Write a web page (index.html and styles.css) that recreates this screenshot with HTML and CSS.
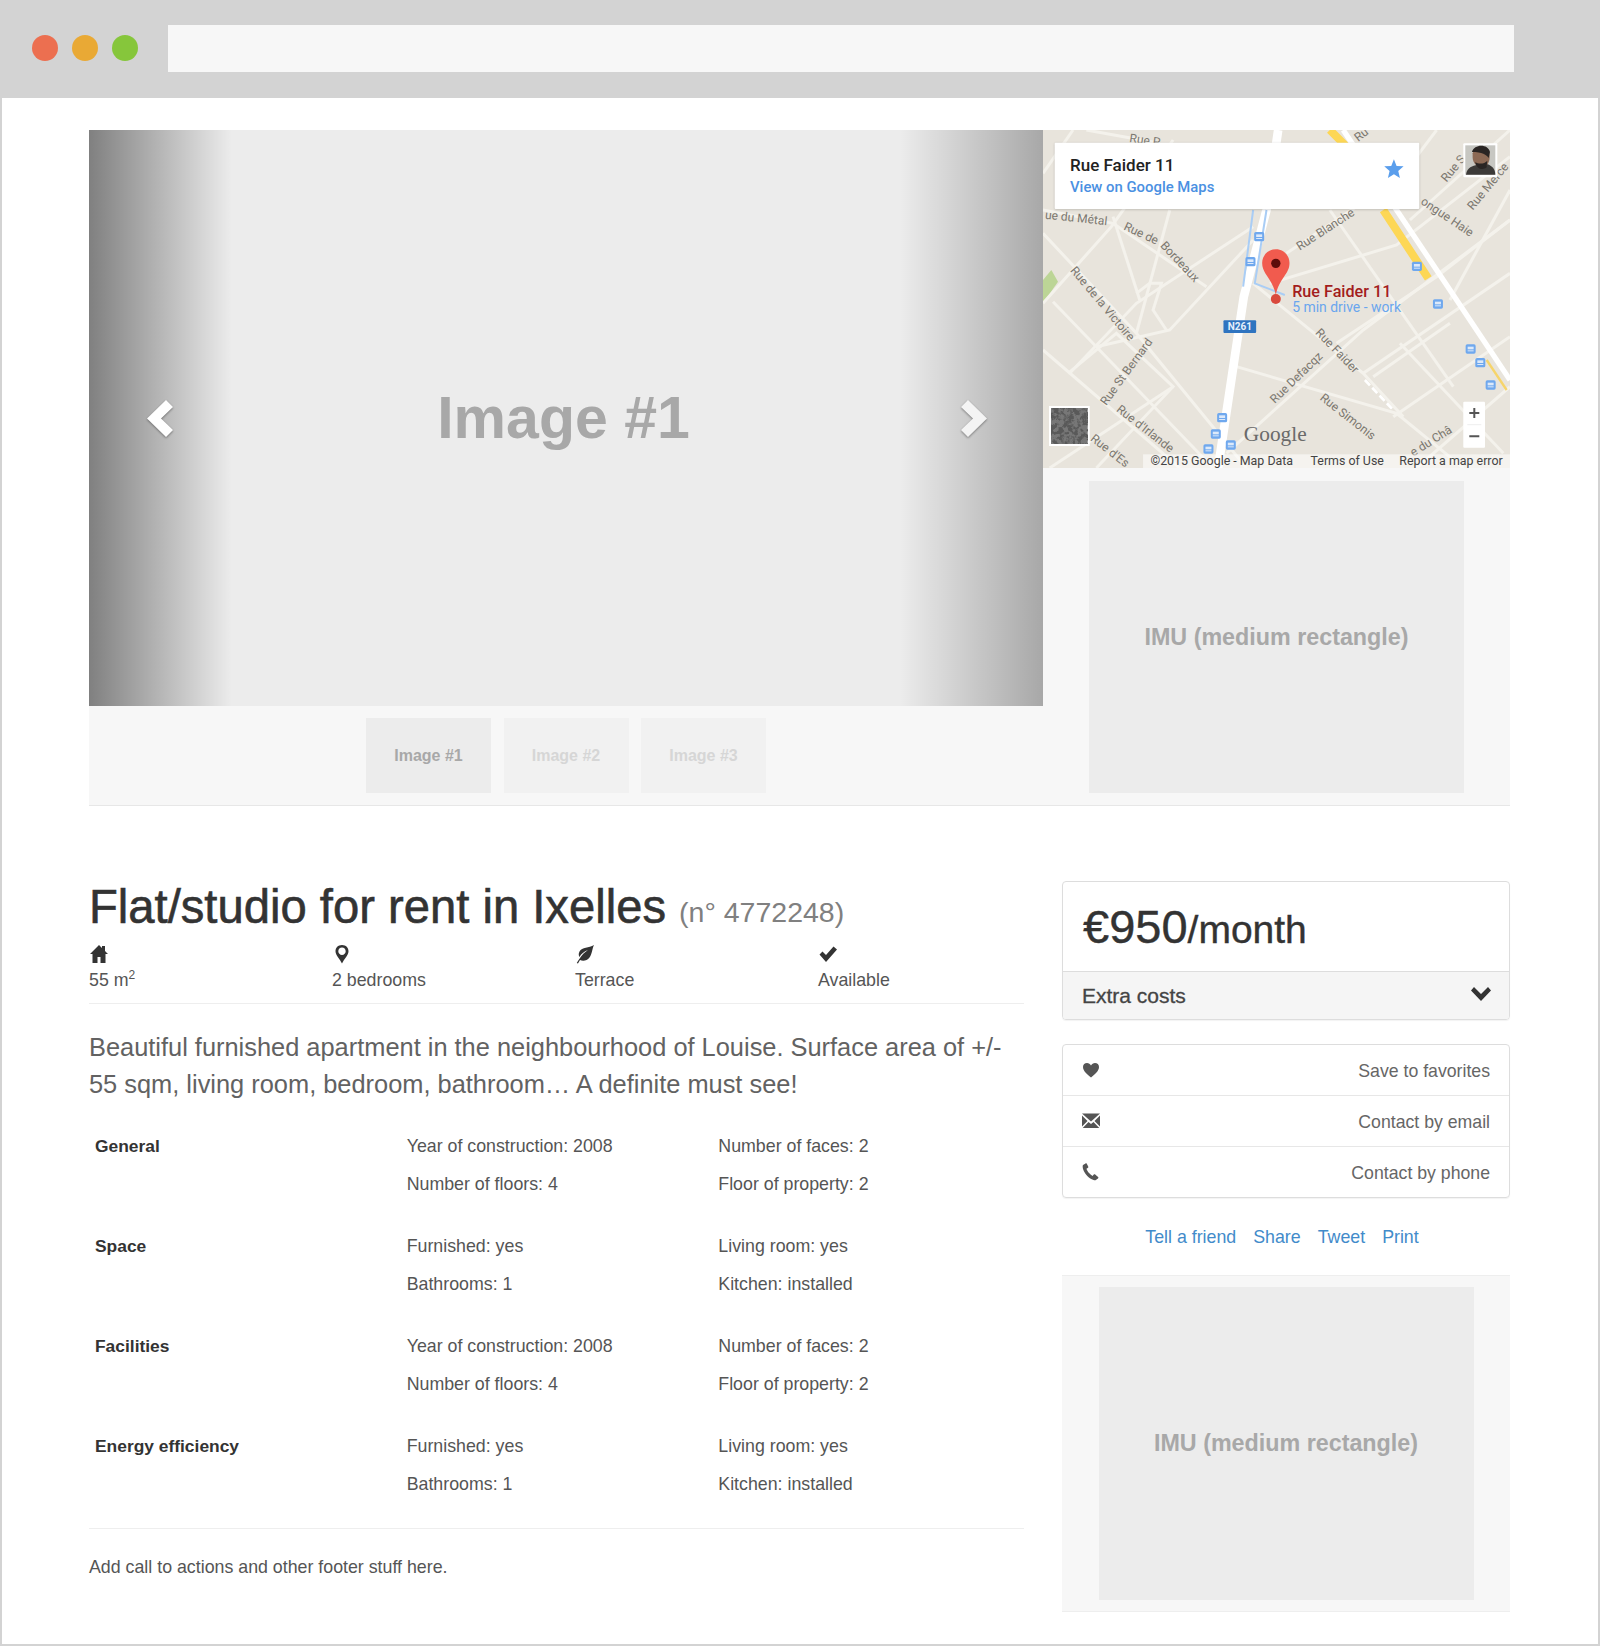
FILE: index.html
```html
<!DOCTYPE html>
<html lang="en">
<head>
    <meta charset="UTF-8">
    <meta name="viewport" content="width=device-width, initial-scale=1.0">
    <title>Flat/studio for rent in Ixelles</title>
    <link rel="stylesheet" href="styles.css">
</head>
<body>

    <div class="window">
        <div class="browser-bar">
            <span class="dot dot-red"></span>
            <span class="dot dot-orange"></span>
            <span class="dot dot-green"></span>
            <div class="address-bar"></div>
        </div>

        <div class="page">
            <div class="top">
                <div class="gallery">
                    <div class="slide">
                        <div class="control control-left">
                            <svg class="chevron" viewBox="0 0 26 37"><path d="M19 0l7 7-12 11.500L26 30l-7 7L0 18.500z"/></svg>
                        </div>
                        <div class="slide-label">Image #1</div>
                        <div class="control control-right">
                            <svg class="chevron" viewBox="0 0 26 37"><path d="M7 0L0 7l12 11.500L0 30l7 7 19-18.500z"/></svg>
                        </div>
                    </div>
                    <div class="thumbs">
                        <div class="thumb active">Image #1</div>
                        <div class="thumb">Image #2</div>
                        <div class="thumb">Image #3</div>
                    </div>
                </div>

                <div class="top-side">
                    <div class="map">
                        <svg class="map-svg" viewBox="10 30 1400 1014" preserveAspectRatio="none">
                            <defs>
                                <filter id="sat" x="0" y="0" width="1" height="1"><feTurbulence type="fractalNoise" baseFrequency="0.07" numOctaves="4" seed="3"/><feColorMatrix values="0 0 0 0 .1  0 0 0 0 .1  0 0 0 0 .1  6 0 0 0 -2.500"/></filter>
                                <g id="bus"><rect x="-15" y="-14" width="30" height="28" rx="5" fill="#6fa8ee"/><rect x="-9" y="-7" width="18" height="8" fill="#dce9fa"/><rect x="-9" y="4" width="18" height="3" fill="#dce9fa"/></g>
                            </defs>
                            <rect x="10" y="30" width="1400" height="1014" fill="#e8e4dc"/>
                            <path d="M10 480L35 450 55 485 10 550z" fill="#bcd596"/>

                            <g class="streets">
                                <path d="M10 340L290 640 620 1044"/>
                                <path d="M10 550L215 320 400 60"/>
                                <path d="M40 545L520 1044"/>
                                <path d="M10 690L420 1044"/>
                                <path d="M90 760L290 550 640 320"/>
                                <path d="M220 290L300 540"/>
                                <path d="M10 270L220 310 500 500"/>
                                <path d="M390 270L290 640"/>
                                <path d="M170 680L390 630 640 360"/>
                                <path d="M290 520L330 490 365 490 340 570 380 630"/>
                                <path d="M85 760L230 640 400 800 170 1044"/>
                                <path d="M590 740L1070 880 1270 1044"/>
                                <path d="M560 1000L970 630 1410 300"/>
                                <path d="M640 490L970 760 1090 890"/>
                                <path d="M740 400L1100 160"/>
                                <path d="M870 270L1240 800"/>
                                <path d="M690 490L1070 375 1410 110"/>
                                <path d="M970 760L1410 460"/>
                                <path d="M890 670L1190 470 1410 300"/>
                                <path d="M1080 670L1390 1000"/>
                                <path d="M1060 890L1410 650"/>
                                <path d="M1230 610L1000 770"/>
                                <path d="M1110 300L1410 30"/>
                                <path d="M1230 540L1410 210"/>
                                <path d="M1130 1044L1410 800"/>
                                <path d="M1190 30L1130 110"/>
                                <path d="M140 30L360 70" stroke="#a9cdf5"/>
                                <path d="M10 160L100 30"/>
                                <path d="M30 1044L400 800"/>
                            </g>

                            <path class="road-yellow" d="M870 30L930 90M1030 270L1165 475"/>
                            <path class="road-white" d="M910 30L1410 780"/>
                            <path class="road-thin-yellow" d="M1340 720L1400 810"/>
                            <path class="road-main" d="M535 1044L612 530 680 270 715 30"/>
                            <path class="road-blue" d="M680 270L645 490 735 525M640 270L610 500"/>
                            <path class="road-dash" d="M975 780L1060 870"/>

                            <use href="#bus" x="658" y="350"/>
                            <use href="#bus" x="632" y="425"/>
                            <use href="#bus" x="1131" y="439"/>
                            <use href="#bus" x="1194" y="552"/>
                            <use href="#bus" x="1292" y="687"/>
                            <use href="#bus" x="1321" y="728"/>
                            <use href="#bus" x="1352" y="795"/>
                            <use href="#bus" x="547" y="893"/>
                            <use href="#bus" x="528" y="942"/>
                            <use href="#bus" x="573" y="975"/>
                            <use href="#bus" x="506" y="987"/>

                            <g class="map-names">
                                <text x="268" y="66" transform="rotate(8 268 66)">Rue P</text>
                                <text x="955" y="66" transform="rotate(-38 955 66)">Ru</text>
                                <text x="15" y="296" transform="rotate(6 15 296)">ue du Métal</text>
                                <text x="250" y="328" transform="rotate(25 250 328)">Rue de</text>
                                <text x="360" y="378" transform="rotate(47 360 378)">Bordeaux</text>
                                <text x="780" y="392" transform="rotate(-33 780 392)">Rue Blanche</text>
                                <text x="1140" y="250" transform="rotate(34 1140 250)">ongue Haie</text>
                                <text x="1220" y="188" transform="rotate(-50 1220 188)">Rue S</text>
                                <text x="1298" y="272" transform="rotate(-50 1298 272)">Rue Merce</text>
                                <text x="90" y="452" transform="rotate(50 90 452)">Rue de la Victoire</text>
                                <text x="200" y="858" transform="rotate(-54 200 858)">Rue St Bernard</text>
                                <text x="228" y="872" transform="rotate(38 228 872)">Rue d'Irlande</text>
                                <text x="150" y="960" transform="rotate(38 150 960)">Rue d'Es</text>
                                <text x="705" y="852" transform="rotate(-44 705 852)">Rue Defacqz</text>
                                <text x="825" y="640" transform="rotate(46 825 640)">Rue Faider</text>
                                <text x="838" y="838" transform="rotate(38 838 838)">Rue Simonis</text>
                                <text x="1120" y="1010" transform="rotate(-32 1120 1010)">e du Châ</text>
                            </g>

                            <rect x="551" y="601" width="98" height="38" rx="3" fill="#2f74c0"/>
                            <text class="shield" x="600" y="630">N261</text>

                            <text class="google" x="612" y="962">Google</text>

                            <path d="M708 388c-23 0-41 18-41 41 0 34 30 44 41 96 11-52 41-62 41-96 0-23-18-41-41-41z" fill="#f15b4e"/>
                            <circle cx="708" cy="430" r="14" fill="#5c0d0a"/>
                            <circle cx="708" cy="537" r="15" fill="#d9493d"/>
                            <text class="pin-name" x="757" y="530">Rue Faider 11</text>
                            <text class="pin-sub" x="757" y="577">5 min drive - work</text>

                            <rect class="map-card" x="45" y="68" width="1093" height="199" rx="3"/>
                            <text class="card-name" x="91" y="152">Rue Faider 11</text>
                            <text class="card-link" x="91" y="217">View on Google Maps</text>
                            <path d="M1062 118l8 20 21 1-16 14 5 21-18-11-18 11 5-21-16-14 21-1z" fill="#5a9eec"/>

                            <rect x="1270" y="70" width="102" height="102" rx="3" fill="#fff"/>
                            <rect x="1276" y="76" width="90" height="88" fill="#c7c7c2"/>
                            <path d="M1278 164c4-24 20-26 34-30 4 4 24 4 30-2 14 6 24 14 24 32z" fill="#3c3a38"/>
                            <path d="M1298 100c8-22 44-20 50 0 4 16-2 34-14 42-14 6-36-8-36-30z" fill="#8d6a55"/>
                            <path d="M1296 96c6-24 48-26 54 0l-4 18c-6-10-20-18-50-18zM1306 126c8 6 26 8 36-4l-2 20c-10 10-32 6-34-16z" fill="#2a2523"/>

                            <rect x="1270" y="845" width="65" height="138" rx="3" fill="#fff"/>
                            <path d="M1288 879h30M1303 864v30M1288 949h30" stroke="#555" stroke-width="6"/>
                            <path d="M1282 914h42" stroke="#e6e6e6" stroke-width="2"/>

                            <rect x="28" y="858" width="122" height="120" fill="#fff"/>
                            <rect x="34" y="864" width="110" height="108" fill="#777"/>
                            <rect x="34" y="864" width="110" height="108" filter="url(#sat)"/>

                            <rect x="310" y="1003" width="1100" height="41" fill="#fff" opacity=".55"/>
                            <g class="attrib">
                                <text x="332" y="1034">©2015 Google - Map Data</text>
                                <text x="812" y="1034">Terms of Use</text>
                                <text x="1078" y="1034">Report a map error</text>
                            </g>
                        </svg>
                    </div>
                    <div class="ad-wrap">
                        <div class="ad">IMU (medium rectangle)</div>
                    </div>
                </div>
            </div>

            <div class="content">
                <div class="main">
                    <h1>Flat/studio for rent in Ixelles <small>(n° 4772248)</small></h1>

                    <div class="features">
                        <div class="feature">
                            <svg class="icon" viewBox="0 0 20 20"><path d="M10 1L1 10h2.500v9h5v-6h3v6h5v-9H19l-3-3V2h-3v2z"/></svg>
                            <span>55 m<sup>2</sup></span>
                        </div>
                        <div class="feature">
                            <svg class="icon" viewBox="0 0 20 20"><path fill-rule="evenodd" d="M10 1C6 1 3.500 3.800 3.500 7.200 3.500 11 8 15 10 19.500 12 15 16.500 11 16.500 7.200 16.500 3.800 14 1 10 1zm0 2.600c2.100 0 3.700 1.600 3.700 3.600s-1.600 3.700-3.700 3.700-3.700-1.700-3.700-3.700S7.900 3.600 10 3.600z"/></svg>
                            <span>2 bedrooms</span>
                        </div>
                        <div class="feature">
                            <svg class="icon" viewBox="0 0 20 20"><path d="M19 1C14 4 7 3 4.500 7.500 3.200 10 3.800 12 4.500 13 6 10 9 7.500 13 6 10 8 6.500 11 4 15.500 3 17 2.300 18 1.800 19l1.200.5c.6-1.200 1.300-2.400 2-3.400 3 1.200 7 .8 9.500-2.600C17 10.500 17 5 19 1z"/></svg>
                            <span>Terrace</span>
                        </div>
                        <div class="feature">
                            <svg class="icon" viewBox="0 0 20 20"><path d="M1.500 10.500L4.500 7.500 8 11 15.500 2.500 19 5.500 8 18z"/></svg>
                            <span>Available</span>
                        </div>
                    </div>

                    <p class="lead">Beautiful furnished apartment in the neighbourhood of Louise. Surface area of +/- 55 sqm, living room, bedroom, bathroom… A definite must see!</p>

                    <table class="specs">
                        <tr>
                            <th rowspan="2">General</th>
                            <td>Year of construction: 2008</td>
                            <td>Number of faces: 2</td>
                        </tr>
                        <tr class="last">
                            <td>Number of floors: 4</td>
                            <td>Floor of property: 2</td>
                        </tr>
                        <tr>
                            <th rowspan="2">Space</th>
                            <td>Furnished: yes</td>
                            <td>Living room: yes</td>
                        </tr>
                        <tr class="last">
                            <td>Bathrooms: 1</td>
                            <td>Kitchen: installed</td>
                        </tr>
                        <tr>
                            <th rowspan="2">Facilities</th>
                            <td>Year of construction: 2008</td>
                            <td>Number of faces: 2</td>
                        </tr>
                        <tr class="last">
                            <td>Number of floors: 4</td>
                            <td>Floor of property: 2</td>
                        </tr>
                        <tr>
                            <th rowspan="2">Energy efficiency</th>
                            <td>Furnished: yes</td>
                            <td>Living room: yes</td>
                        </tr>
                        <tr class="last">
                            <td>Bathrooms: 1</td>
                            <td>Kitchen: installed</td>
                        </tr>
                    </table>

                    <div class="main-footer">Add call to actions and other footer stuff here.</div>
                </div>

                <div class="side">
                    <div class="panel price-panel">
                        <div class="price"><strong>€950</strong>/month</div>
                        <div class="extra">
                            <span>Extra costs</span>
                            <svg class="extra-icon" viewBox="0 0 20 14"><path d="M3 0L0 3.500 10 14 20 3.500 17 0 10 7z"/></svg>
                        </div>
                    </div>

                    <div class="panel actions">
                        <div class="action">
                            <svg class="action-icon" viewBox="0 0 18 18"><path d="M9 16.500C5 13 1 10 1 6c0-2.500 1.800-4 4-4 1.700 0 3.200 1 4 2.500C9.800 3 11.300 2 13 2c2.200 0 4 1.500 4 4 0 4-4 7-8 10.500z"/></svg>
                            <span>Save to favorites</span>
                        </div>
                        <div class="action">
                            <svg class="action-icon" viewBox="0 0 18 18"><path d="M0 1.500h18L9 9.500zM0 3.500v11l5.500-5.500zM18 3.500v11l-5.500-5.500zM6.500 10L9 12l2.500-2 5.800 6H.7z"/></svg>
                            <span>Contact by email</span>
                        </div>
                        <div class="action">
                            <svg class="action-icon" viewBox="0 0 18 18"><path d="M3.500 0.500L1 2C.3 3 .5 7 4 11.500c3.500 4.500 8 6 9.500 5.800l2.500-1.800c.5-.4.500-1 .1-1.400l-2.900-2.600c-.4-.3-1-.3-1.400.1l-1.300 1.300C9 12 7.500 10.800 6.300 9.200 5.200 7.700 4.500 6.300 4.500 5.800L6 4.700c.4-.3.500-.9.200-1.300L4.800.8C4.500.3 3.900.2 3.500.5z"/></svg>
                            <span>Contact by phone</span>
                        </div>
                    </div>

                    <div class="share">
                        <a href="#">Tell a friend</a>
                        <a href="#">Share</a>
                        <a href="#">Tweet</a>
                        <a href="#">Print</a>
                    </div>

                    <div class="ad-wrap ad-wrap-side">
                        <div class="ad">IMU (medium rectangle)</div>
                    </div>
                </div>
            </div>
        </div>
    </div>

</body>
</html>
```

FILE: styles.css
```css
html, body {
    margin: 0;
    padding: 0;
}
body {
    font-family: "Liberation Sans", Arial, sans-serif;
    color: #333;
    background: #fff;
}
.window {
    box-sizing: border-box;
    width: 1600px;
    height: 1646px;
    border: 2px solid #d3d3d3;
    border-top: none;
    overflow: hidden;
}

/* browser chrome */
.browser-bar {
    display: flex;
    align-items: center;
    height: 96px;
    margin: 0 -2px;
    padding: 0 0 2px 32px;
    background: #d3d3d3;
}
.dot {
    width: 26px;
    height: 26px;
    border-radius: 50%;
    margin-right: 14px;
}
.dot-red { background: #ec6f50; }
.dot-orange { background: #e9a935; }
.dot-green { background: #86c63b; }
.address-bar {
    width: 1346px;
    height: 47px;
    margin-left: 16px;
    background: #f7f7f7;
}

.page {
    padding: 32px 88px 0 87px;
}

/* gallery + map */
.top {
    display: flex;
    border-bottom: 1px solid #e7e7e7;
}
.gallery {
    width: 954px;
    background: #f7f7f7;
}
.slide {
    display: flex;
    align-items: center;
    justify-content: space-between;
    height: 576px;
    background: #ececec;
}
.control {
    display: flex;
    align-items: center;
    width: 143px;
    height: 100%;
    box-sizing: border-box;
}
.control-left {
    padding-left: 58px;
    background: linear-gradient(to right, rgba(0,0,0,0.46), rgba(0,0,0,0));
}
.control-right {
    justify-content: flex-end;
    padding-right: 56px;
    background: linear-gradient(to left, rgba(0,0,0,0.29), rgba(0,0,0,0));
}
.chevron {
    width: 26px;
    height: 37px;
    fill: #fff;
    filter: drop-shadow(0 1px 1px rgba(0,0,0,0.4));
}
.control-right .chevron {
    fill: #f4f4f4;
}
.slide-label {
    margin-right: 5px;
    font-size: 59px;
    font-weight: bold;
    color: #a8a8a8;
}
.thumbs {
    display: flex;
    justify-content: center;
    gap: 12.500px;
    padding: 12px 0;
}
.thumb {
    display: flex;
    align-items: center;
    justify-content: center;
    width: 125px;
    height: 75px;
    background: #f1f1f1;
    color: #d6d6d6;
    font-size: 16px;
    font-weight: bold;
}
.thumb.active {
    background: #ececec;
    color: #a8a8a8;
}

.top-side {
    width: 467px;
    background: #f7f7f7;
}
.map {
    height: 338px;
}
.map-svg {
    display: block;
    width: 467px;
    height: 338px;
    font-family: Roboto, sans-serif;
}
.streets path {
    fill: none;
    stroke: #f4f2ec;
    stroke-width: 9;
}
.road-yellow {
    fill: none;
    stroke: #fdd755;
    stroke-width: 24;
}
.road-white {
    fill: none;
    stroke: #fff;
    stroke-width: 16;
}
.road-thin-yellow {
    fill: none;
    stroke: #f6d46a;
    stroke-width: 7;
}
.road-main {
    fill: none;
    stroke: #fff;
    stroke-width: 26;
}
.road-blue {
    fill: none;
    stroke: #a9cdf5;
    stroke-width: 6;
}
.road-dash {
    fill: none;
    stroke: #fff;
    stroke-width: 8;
    stroke-dasharray: 22 10;
}
.map-names text {
    font-size: 36px;
    fill: #7b776f;
}
.shield {
    font-size: 30px;
    font-weight: bold;
    fill: #e6f0fb;
    text-anchor: middle;
}
.google {
    font-family: "Liberation Serif", serif;
    font-size: 64px;
    fill: #6a6a6a;
}
.pin-name {
    font-size: 48.500px;
    font-weight: 500;
    fill: #a31d1d;
}
.pin-sub {
    font-size: 41.800px;
    fill: #6aa6ee;
}
.map-card {
    fill: #fff;
    filter: drop-shadow(0 2px 3px rgba(0,0,0,0.2));
}
.card-name {
    font-size: 51px;
    font-weight: 500;
    fill: #222;
}
.card-link {
    font-size: 44.600px;
    font-weight: 500;
    fill: #4a90e2;
}
.attrib text {
    font-size: 37.200px;
    fill: #444;
}

.ad-wrap {
    display: flex;
    justify-content: center;
    padding: 13px 0 12px;
    background: #f7f7f7;
}
.ad {
    display: flex;
    align-items: center;
    justify-content: center;
    width: 375px;
    height: 312px;
    background: #ececec;
    color: #a8a8a8;
    font-size: 23.300px;
    font-weight: bold;
}

/* content */
.content {
    display: flex;
    justify-content: space-between;
    padding-top: 74px;
}
.main {
    width: 935px;
}
h1 {
    margin: 0;
    font-size: 47.200px;
    font-weight: normal;
    line-height: 53px;
    color: #333;
    -webkit-text-stroke: 0.6px #333;
}
h1 small {
    font-size: 28.500px;
    color: #808080;
    vertical-align: 1px;
    -webkit-text-stroke: 0;
}
.features {
    display: flex;
    padding: 5px 0 12px;
    border-bottom: 1px solid #eee;
}
.feature {
    display: flex;
    flex: none;
    flex-direction: column;
    width: 243px;
    font-size: 17.800px;
    color: #555;
}
.feature .icon {
    width: 20px;
    height: 20px;
    fill: #333;
    margin-bottom: 6px;
}
.feature sup {
    font-size: 12px;
    line-height: 0;
}
.lead {
    margin: 25px 0 25px;
    font-size: 25.400px;
    line-height: 37px;
    color: #626262;
}
.specs {
    width: 100%;
    border-collapse: collapse;
    table-layout: fixed;
    font-size: 17.800px;
    color: #555;
}
.specs th, .specs td {
    padding: 9px 6px;
    line-height: 19.500px;
    text-align: left;
    vertical-align: top;
    font-weight: normal;
}
.specs th {
    font-size: 17.400px;
    font-weight: bold;
    color: #333;
}
.specs .last td {
    padding-bottom: 34px;
}
.main-footer {
    padding-top: 28px;
    border-top: 1px solid #eee;
    font-size: 17.800px;
    color: #555;
}

.side {
    width: 448px;
    margin-top: 1px;
}
.panel {
    border: 1px solid #ddd;
    border-radius: 4px;
    box-shadow: 0 1px 1px rgba(0,0,0,0.05);
    overflow: hidden;
}
.price {
    height: 89px;
    padding-left: 20px;
    font-size: 39px;
    line-height: 90px;
    border-bottom: 1px solid #ddd;
    -webkit-text-stroke: 0.4px #333;
}
.price strong {
    font-size: 47px;
    font-weight: normal;
}
.extra {
    display: flex;
    align-items: center;
    justify-content: space-between;
    height: 47px;
    padding: 0 18px 0 19px;
    background: #f5f5f5;
    font-size: 21px;
    color: #444;
    -webkit-text-stroke: 0.3px #444;
}
.extra-icon {
    width: 20px;
    height: 14px;
    fill: #333;
    margin-bottom: 4px;
}
.actions {
    margin-top: 24px;
}
.action {
    display: flex;
    align-items: center;
    justify-content: space-between;
    height: 50px;
    padding: 0 19px;
    border-top: 1px solid #e7e7e7;
    font-size: 17.700px;
    color: #666;
}
.action:first-child {
    border-top: none;
}
.action span {
    padding-top: 2px;
}
.action-icon {
    width: 18px;
    height: 18px;
    fill: #555;
    margin-bottom: 1px;
}
.share {
    display: flex;
    justify-content: center;
    gap: 17px;
    padding: 29px 8px 28px 0;
    font-size: 17.800px;
    line-height: 20px;
}
.share a {
    color: #428bca;
    text-decoration: none;
}
.ad-wrap-side {
    padding: 11px 0;
    border-top: 1px solid #eee;
    border-bottom: 1px solid #eee;
}
.ad-wrap-side .ad {
    height: 313px;
}
```
